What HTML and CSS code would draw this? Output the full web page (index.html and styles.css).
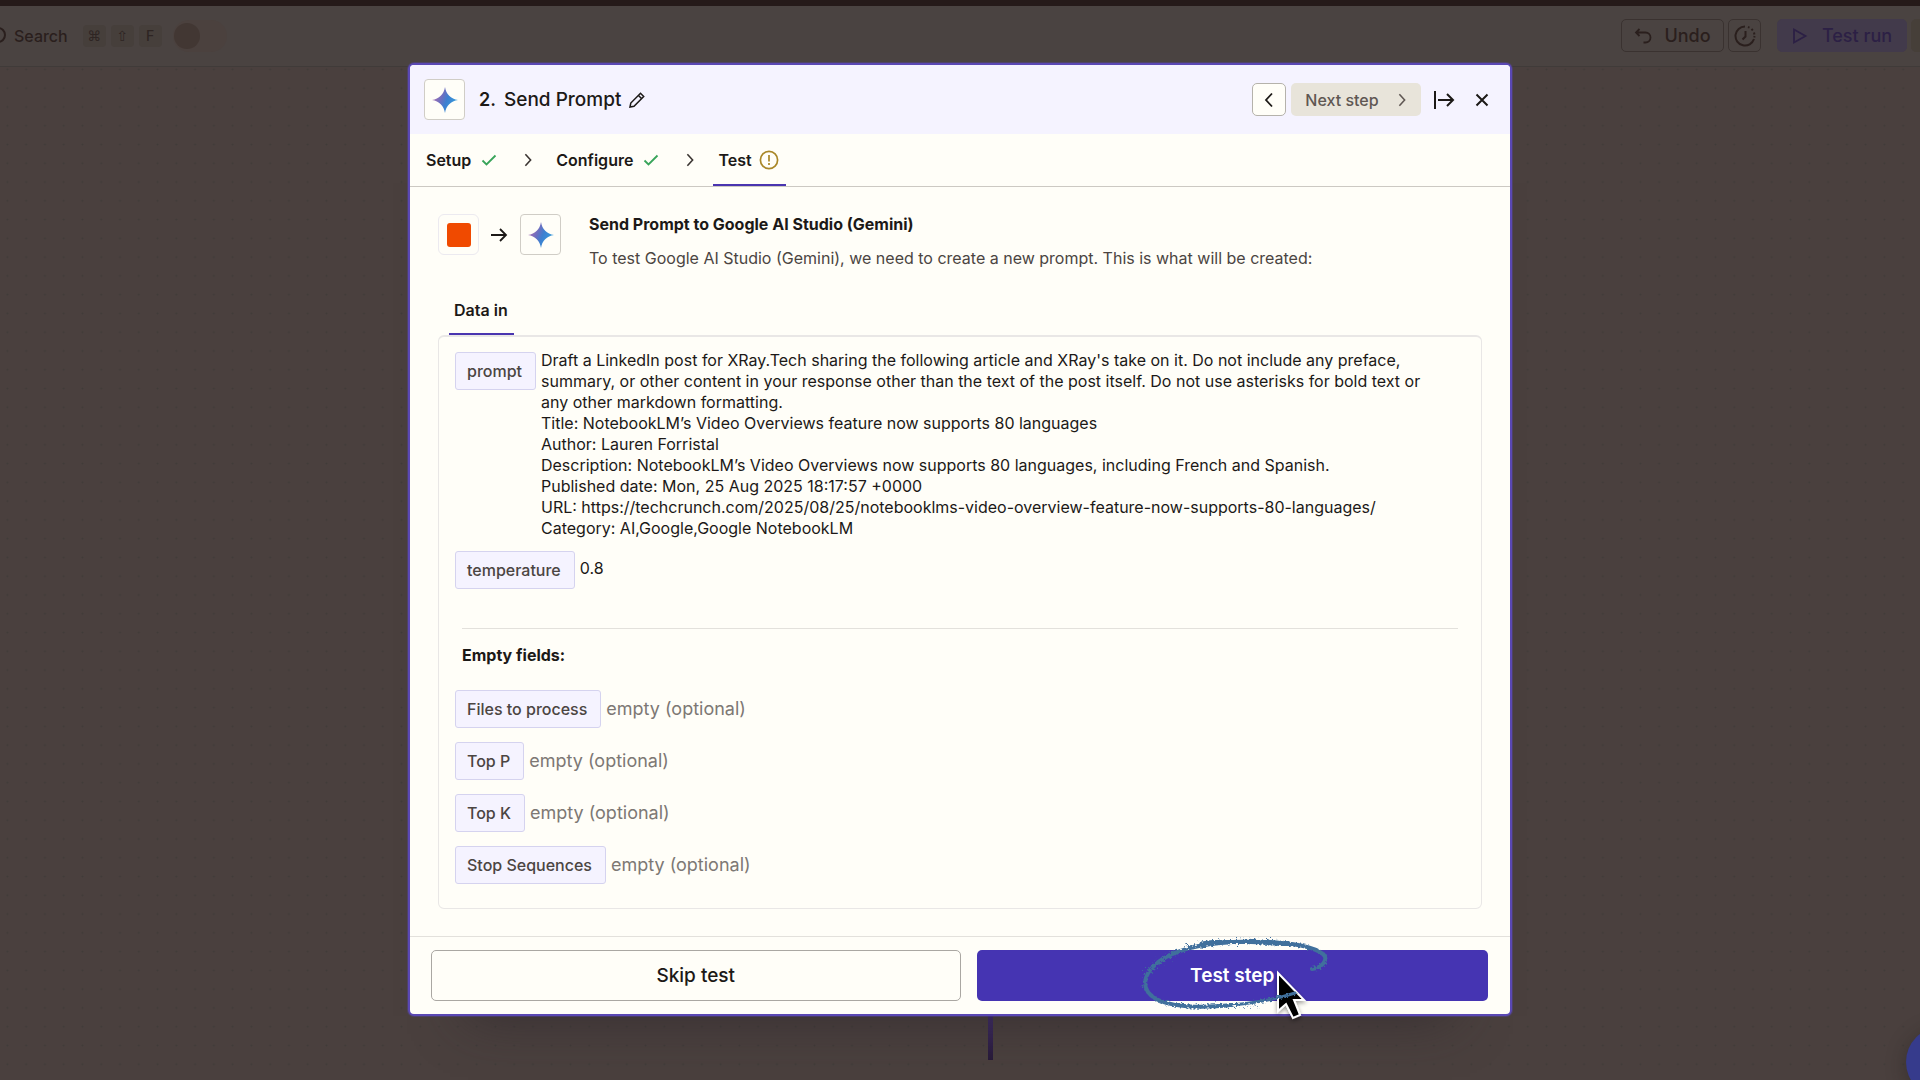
FILE: index.html
```html
<!DOCTYPE html>
<html lang="en">
<head>
<meta charset="utf-8">
<meta name="viewport" content="width=device-width, initial-scale=1">
<title>Send Prompt</title>
<link rel="stylesheet" href="styles.css">
</head>
<body>
<svg class="defs" width="0" height="0" aria-hidden="true">
  <defs>
    <linearGradient id="gem" x1="0" y1=".3" x2="1" y2=".7">
      <stop offset="0" stop-color="#b56fae"/>
      <stop offset=".36" stop-color="#6c6fc0"/>
      <stop offset=".56" stop-color="#3d7fd0"/>
      <stop offset="1" stop-color="#35a2dc"/>
    </linearGradient>
    <symbol id="spark" viewBox="0 0 24 24">
      <path fill="url(#gem)" d="M12 0C13 6.600 17.400 11 24 12C17.400 13 13 17.400 12 24C11 17.400 6.600 13 0 12C6.600 11 11 6.600 12 0Z"/>
    </symbol>
    <symbol id="check" viewBox="0 0 16 16">
      <path d="M1.500 8.500L5.500 12.500L14.500 3.500" fill="none" stroke="currentColor" stroke-width="1.800"/>
    </symbol>
    <symbol id="chevron" viewBox="0 0 10 16">
      <path d="M2 1.500L8 8L2 14.500" fill="none" stroke="currentColor" stroke-width="1.800"/>
    </symbol>
  </defs>
</svg>

<header class="topbar">
  <div class="topbar-left">
    <svg class="lens" viewBox="0 0 20 20" aria-hidden="true"><circle cx="12" cy="9" r="7" fill="none" stroke="currentColor" stroke-width="2"/><path d="M7 14L1 20" stroke="currentColor" stroke-width="2"/></svg>
    <span class="search-label">Search</span>
    <kbd class="symbol">⌘</kbd><kbd class="symbol">⇧</kbd><kbd>F</kbd>
    <label class="toggle"><input type="checkbox" aria-label="Toggle"></label>
  </div>
  <div class="topbar-right">
    <button class="bar-btn undo" type="button">
      <svg width="18" height="18" viewBox="0 0 18 18" fill="none" stroke="currentColor" stroke-width="1.800" aria-hidden="true"><path d="M5.500 2L2 5.500L5.500 9M2 5.500H11.500A4.500 4.500 0 0 1 11.500 15.500H9.500"/></svg>
      Undo
    </button>
    <button class="bar-btn history" type="button" aria-label="History">
      <svg width="22" height="22" viewBox="0 0 22 22" fill="none" stroke="currentColor" stroke-width="2" aria-hidden="true"><path d="M11 1.500A9.500 9.500 0 1 0 20 14"/><path d="M14 2L15.500 2.600M17.500 4L18.800 5.400M20 7.500L20.400 9.500M20.500 11L20.300 12.500" stroke-dasharray="2 9"/><path d="M11.500 6V11.500L8.500 14.500"/></svg>
    </button>
    <button class="bar-btn run" type="button">
      <svg width="16" height="18" viewBox="0 0 16 18" fill="none" stroke="currentColor" stroke-width="1.800" aria-hidden="true"><path d="M2 2.500L13.500 9L2 15.500Z"/></svg>
      Test run
    </button>
    <button class="bar-btn publish" type="button" aria-label="Publish"></button>
  </div>
</header>

<main class="canvas">
  <svg class="dots" aria-hidden="true">
    <pattern id="grid" width="25" height="25" patternUnits="userSpaceOnUse" patternTransform="translate(-2 -7) scale(.7508)"><circle cx="12.500" cy="12.500" r="1.400" fill="#403b38"/></pattern>
    <rect width="100%" height="100%" fill="url(#grid)"/>
  </svg>
  <span class="connector"></span>
  <button class="help" type="button" aria-label="Help"></button>
</main>

<div class="overlay">
  <section class="modal" role="dialog" aria-labelledby="step-title">
    <header class="modal-head">
      <span class="app-icon"><svg width="26" height="26"><use href="#spark"/></svg></span>
      <span class="step-number">2.</span>
      <h1 id="step-title">Send Prompt</h1>
      <button class="icon-btn" type="button" aria-label="Rename step">
        <svg width="16" height="16" viewBox="0 0 16 16" fill="none" stroke="currentColor" stroke-width="1.500" aria-hidden="true"><path d="M1 15L1.800 11L11.500 1.300L14.700 4.500L5 14.200ZM9.500 3.500L12.500 6.500"/></svg>
      </button>
      <div class="head-actions">
        <button class="back" type="button" aria-label="Previous step"><svg class="flip" width="10" height="16" aria-hidden="true"><use href="#chevron"/></svg></button>
        <button class="next" type="button">Next step <svg width="10" height="14" aria-hidden="true"><use href="#chevron"/></svg></button>
        <button class="icon-btn collapse" type="button" aria-label="Collapse panel">
          <svg width="22" height="20" viewBox="0 0 22 20" fill="none" stroke="currentColor" stroke-width="2" aria-hidden="true"><path d="M2 1V19M5 10H20M14 4L20 10L14 16"/></svg>
        </button>
        <button class="icon-btn" type="button" aria-label="Close">
          <svg width="14" height="14" viewBox="0 0 14 14" stroke="currentColor" stroke-width="2" aria-hidden="true"><path d="M1.500 1.500L12.500 12.500M12.500 1.500L1.500 12.500"/></svg>
        </button>
      </div>
    </header>

    <nav class="steps" aria-label="Step stages">
      <button class="stage" type="button">Setup <svg class="ok" width="16" height="16" aria-hidden="true"><use href="#check"/></svg></button>
      <svg class="sep" width="10" height="14" aria-hidden="true"><use href="#chevron"/></svg>
      <button class="stage" type="button">Configure <svg class="ok" width="16" height="16" aria-hidden="true"><use href="#check"/></svg></button>
      <svg class="sep" width="10" height="14" aria-hidden="true"><use href="#chevron"/></svg>
      <button class="stage current" type="button" aria-current="step">Test
        <svg class="warn" width="20" height="20" viewBox="0 0 20 20" fill="none" stroke="currentColor" stroke-width="1.700" aria-hidden="true"><circle cx="10" cy="10" r="8.600"/><path d="M10 5V11.500M10 13V15"/></svg>
      </button>
    </nav>

    <div class="modal-body">
      <div class="summary">
        <span class="app-icon source"><span class="source-mark"></span></span>
        <svg class="arrow" width="18" height="16" viewBox="0 0 18 16" fill="none" stroke="currentColor" stroke-width="1.800" aria-hidden="true"><path d="M1 8H16M10 2L16 8L10 14"/></svg>
        <span class="app-icon"><svg width="26" height="26"><use href="#spark"/></svg></span>
        <div class="summary-text">
          <h2>Send Prompt to Google AI Studio (Gemini)</h2>
          <p>To test Google AI Studio (Gemini), we need to create a new prompt. This is what will be created:</p>
        </div>
      </div>

      <div class="tabs" role="tablist"><button class="tab" role="tab" aria-selected="true" type="button">Data in</button></div>

      <div class="panel" role="tabpanel">
        <dl class="fields">
          <div class="field"><dt>prompt</dt>
            <dd class="value">Draft a LinkedIn post for XRay.Tech sharing the following article and XRay's take on it. Do not include any preface, summary, or other content in your response other than the text of the post itself. Do not use asterisks for bold text or any other markdown formatting.<br>Title: NotebookLM’s Video Overviews feature now supports 80 languages<br>Author: Lauren Forristal<br>Description: NotebookLM’s Video Overviews now supports 80 languages, including French and Spanish.<br>Published date: Mon, 25 Aug 2025 18:17:57 +0000<br>URL: https://techcrunch.com/2025/08/25/notebooklms-video-overview-feature-now-supports-80-languages/<br>Category: AI,Google,Google NotebookLM</dd></div>
          <div class="field"><dt>temperature</dt><dd class="value short">0.8</dd></div>
        </dl>
        <div class="empty">
          <h3>Empty fields:</h3>
        </div>
        <dl class="fields empty-fields">
          <div class="field"><dt>Files to process</dt><dd>empty (optional)</dd></div>
          <div class="field"><dt>Top P</dt><dd>empty (optional)</dd></div>
          <div class="field"><dt>Top K</dt><dd>empty (optional)</dd></div>
          <div class="field"><dt>Stop Sequences</dt><dd>empty (optional)</dd></div>
        </dl>
      </div>
    </div>

    <footer class="modal-foot">
      <button class="action skip" type="button">Skip test</button>
      <div class="test-wrap">
        <button class="action test" type="button">Test step</button>
        <svg class="scribble" width="200" height="80" viewBox="0 0 200 80" aria-hidden="true">
          <defs>
            <filter id="chalk" x="-10%" y="-20%" width="120%" height="140%"><feTurbulence type="fractalNoise" baseFrequency=".5" numOctaves="2" seed="4"/><feDisplacementMap in="SourceGraphic" scale="4"/></filter>
            <filter id="dust" x="-10%" y="-20%" width="120%" height="140%"><feTurbulence type="fractalNoise" baseFrequency=".6" numOctaves="2" seed="9"/><feDisplacementMap in="SourceGraphic" scale="16"/></filter>
            <filter id="soft" x="-50%" y="-50%" width="200%" height="200%"><feDropShadow dx="0" dy="2" stdDeviation="2" flood-opacity=".4"/></filter>
          </defs>
          <path class="pointer" filter="url(#soft)" d="M146 38V76L154 69L161 83L168 80L162 65H172Z"/>
          <g fill="none" stroke="#3f6f9c" stroke-linecap="round">
            <path filter="url(#dust)" stroke-width="2" stroke-dasharray="1 5" d="M195 21C185 13 161 7 125 6C81 5 45 13 27 27C15 37 9 47 11 55"/>
            <path filter="url(#dust)" stroke-width="2" stroke-dasharray="1 6" d="M25 65C51 75 91 73 127 70"/>
            <path filter="url(#chalk)" stroke-width="4" d="M180 34C190 33 196 25 192 20C184 12 160 7 126 7C84 5 42 13 24 29C10 41 9 55 24 64C40 72 70 73 100 70"/>
            <path filter="url(#chalk)" stroke-width="3" d="M98 70C126 68 148 63 163 58"/>
            <path filter="url(#chalk)" stroke-width="5" d="M70 9C100 4 140 7 160 10"/>
          </g>
        </svg>
      </div>
    </footer>
  </section>
</div>
</body>
</html>
```
FILE: styles.css
```css
* { box-sizing: border-box; }

body {
  margin: 0;
  min-height: 100vh;
  display: flex;
  flex-direction: column;
  overflow: hidden;
  border-top: 6px solid #251a19;
  background: #4a403e;
  color: #1c1917;
  font: 400 16px/20px Inter, "Liberation Sans", sans-serif;
}

h1, h2, h3, p, dl, dd { margin: 0; }
button { font: inherit; color: inherit; border: 0; padding: 0; background: none; }
svg { display: block; flex: none; }
.defs { position: absolute; }

/* Editor behind the dialog */
.topbar {
  display: flex;
  justify-content: space-between;
  align-items: center;
  height: 61px;
  padding-bottom: 1px;
  background: #4a4341;
  border-bottom: 1px solid #403b39;
  color: #2a1f1d;
  overflow: hidden;
}
.topbar-left, .topbar-right { display: flex; align-items: center; }
.topbar-left { gap: 5px; }
.lens { width: 20px; height: 20px; margin-left: -14px; }
.search-label { margin: 0 10px 0 3px; font-weight: 500; }
kbd {
  width: 23px;
  height: 22px;
  border-radius: 4px;
  background: #463f3b;
  color: #2e2523;
  font: 500 14px/22px Inter, sans-serif;
  text-align: center;
}
.symbol { font-family: "DejaVu Sans", sans-serif; font-weight: 400; }
.toggle {
  display: flex;
  margin-left: 6px;
  width: 54px;
  height: 32px;
  border-radius: 16px;
  background: #4b413e;
}
.toggle input {
  appearance: none;
  width: 26px;
  height: 26px;
  margin: 3px 1px;
  border-radius: 50%;
  background: #423733;
}
.topbar-right { gap: 4px; margin-right: -23px; }
.bar-btn {
  display: flex;
  align-items: center;
  justify-content: center;
  height: 33px;
  border: 1px solid #3a3230;
  border-radius: 5px;
  font-size: 18px;
  font-weight: 500;
}
.undo { width: 103px; gap: 12px; }
.history { width: 33px; }
.run {
  width: 130px;
  gap: 14px;
  margin-left: 12px;
  border-color: #423a4b;
  background: #423a4b;
  color: #2c2045;
}
.publish { width: 32px; background: #463f39; border-color: #463f39; }

.canvas { position: relative; flex: 1; }
.dots { position: absolute; inset: 0; width: 100%; height: 100%; }
.connector {
  position: absolute;
  left: calc(50% + 28px);
  bottom: 20px;
  width: 5px;
  height: 60px;
  background: linear-gradient(#45317a, #281a38);
}
.help {
  position: absolute;
  right: -56px;
  bottom: -17px;
  width: 70px;
  height: 70px;
  border-radius: 50%;
  background: #363b8c;
  box-shadow: 0 4px 20px rgba(30, 25, 25, .4);
}

/* Dialog */
.overlay {
  position: absolute;
  inset: 0;
  display: flex;
  align-items: flex-start;
  justify-content: center;
  padding: 63px 16px;
}
.modal {
  width: 100%;
  max-width: 1104px;
  border: 2px solid #5a48b4;
  border-radius: 6px;
  background: #fffef8;
  box-shadow: 0 0 0 1px rgba(90, 72, 180, .35), 0 60px 50px -60px rgba(40, 34, 40, .6);
}
.modal-head {
  display: flex;
  align-items: center;
  height: 69px;
  padding: 0 21px 0 14px;
  border-radius: 4px 4px 0 0;
  background: #f5f3ff;
}
.app-icon {
  display: flex;
  align-items: center;
  justify-content: center;
  flex: none;
  width: 41px;
  height: 41px;
  border: 1px solid #d0cdc6;
  border-radius: 4px;
  background: #fffef8;
}
.step-number { margin: 0 8px 0 14px; font-size: 18px; font-weight: 600; }
h1 { margin-right: 8px; font-size: 19px; line-height: 24px; font-weight: 500; }
.icon-btn { display: flex; }
.head-actions { display: flex; align-items: center; margin-left: auto; }
.back, .next {
  display: flex;
  align-items: center;
  justify-content: center;
  height: 33px;
  border-radius: 5px;
}
.back { width: 34px; border: 1px solid #b5b2ab; background: #fffef8; }
.flip { transform: rotate(180deg); }
.next {
  width: 130px;
  gap: 18px;
  margin-left: 5px;
  background: #e8e4da;
  color: #5f5753;
  font-weight: 500;
}
.collapse { margin: 0 20px 0 12px; }

.steps {
  display: flex;
  align-items: center;
  height: 53px;
  padding-left: 16px;
  border-bottom: 1px solid #ccc9c3;
  font-weight: 600;
}
.stage { display: flex; align-items: center; gap: 10px; height: 52px; }
.ok { color: #38a45a; }
.sep { margin: 0 23px 0 26px; color: #3a3431; }
.current {
  gap: 7px;
  margin-left: -5px;
  padding: 2px 7px 0 5px;
  border-bottom: 2px solid #4a35b0;
}
.warn { color: #a98728; }

.modal-body { padding: 27px 28px; }
.summary { display: flex; align-items: flex-start; }
.source { border-color: #eceaf0; border-radius: 6px; }
.source-mark { width: 24px; height: 24px; border-radius: 3px; background: #f04a00; }
.arrow { margin: 13px 12px 13px 11px; }
.summary-text { margin-left: 28px; }
h2, h3 { font-size: 16px; line-height: 20px; font-weight: 700; }
.summary p { margin-top: 14px; color: #4b4542; }

.tabs { display: flex; padding-left: 11px; margin-top: 21px; }
.tab {
  height: 46px;
  padding: 0 6px 2px 5px;
  border-bottom: 2px solid #4a35b0;
  font-weight: 600;
}
.panel {
  padding: 15px 16px 24px;
  border: 1px solid #e9e7e6;
  border-top-width: 2px;
  border-radius: 6px;
}
.fields { display: flex; flex-direction: column; gap: 12px; }
.field { display: flex; align-items: flex-start; gap: 5px; }
dt {
  flex: none;
  height: 38px;
  padding: 0 13px 0 11px;
  border: 1px solid #d5d3ef;
  border-radius: 3px;
  background: #f5f3ff;
  color: #4b4542;
  font-weight: 500;
  line-height: 36px;
}
.value { margin-top: -2px; padding-right: 16px; line-height: 21px; }
.short { line-height: 38px; }
.empty { margin: 39px 7px 0; border-top: 1px solid #e3e1dc; }
h3 { margin-top: 16px; }
.empty-fields { margin-top: 25px; gap: 14px; }
.empty-fields dd { color: #7d7874; font-size: 18px; line-height: 38px; }

.modal-foot {
  display: flex;
  gap: 16px;
  padding: 13px 22px 13px 21px;
  border-top: 1px solid #e3e1dc;
}
.action {
  width: 100%;
  height: 51px;
  padding-top: 1px;
  border-radius: 5px;
  font-size: 19px;
  font-weight: 500;
}
.skip { flex: 528; border: 1px solid #aaa7a2; }
.test-wrap { position: relative; flex: 512; }
.test { background: #4534b2; color: #fff; font-weight: 600; }
.scribble {
  position: absolute;
  left: calc(50% - 100px);
  top: -15px;
  overflow: visible;
  pointer-events: none;
}
.pointer { fill: #000; stroke: #fff; stroke-width: 2; }
```
